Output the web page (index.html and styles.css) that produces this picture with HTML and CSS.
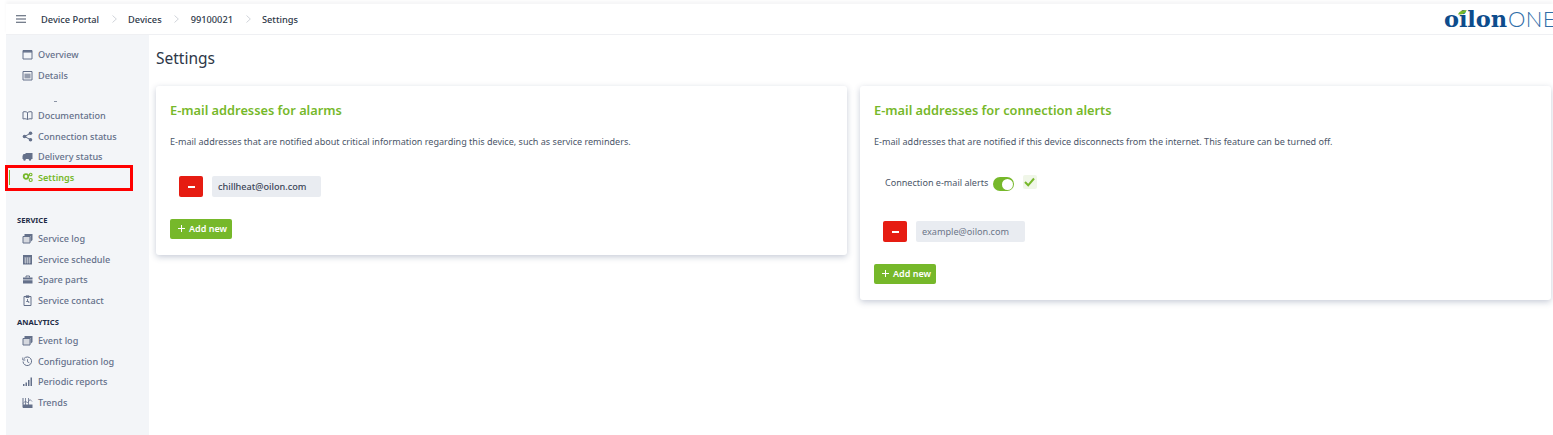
FILE: index.html
```html
<!DOCTYPE html>
<html lang="en">
<head>
<meta charset="utf-8">
<title>Settings</title>
<link rel="stylesheet" href="styles.css">
</head>
<body>
<div class="app">
  <header class="topbar">
    <svg class="burger" width="10" height="8" viewBox="0 0 10 8"><path d="M0 .75h10M0 4h10M0 7.25h10" stroke="#4a5568" stroke-width="1.1"/></svg>
    <nav class="crumbs">
      <span>Device Portal</span><svg class="sep" width="5" height="8" viewBox="0 0 5 8"><path d="M.5.5 4.300 4 .5 7.500" fill="none" stroke="#c5c9d0" stroke-width=".8"/></svg>
      <span>Devices</span><svg class="sep" width="5" height="8" viewBox="0 0 5 8"><path d="M.5.5 4.300 4 .5 7.500" fill="none" stroke="#c5c9d0" stroke-width=".8"/></svg>
      <span>99100021</span><svg class="sep" width="5" height="8" viewBox="0 0 5 8"><path d="M.5.5 4.300 4 .5 7.500" fill="none" stroke="#c5c9d0" stroke-width=".8"/></svg>
      <span>Settings</span>
    </nav>
    <div class="logo"><span class="logo-oilon">oilon</span><span class="logo-one">ONE</span><svg class="leaf" width="9" height="5" viewBox="0 0 9 5"><path d="M0 4.600C1 1.500 4 .2 8.600 0 8 2.800 5.500 4.800 0 4.600Z" fill="#76b82a"/></svg></div>
  </header>
  <div class="body">
    <aside class="sidebar">
      <ul class="menu">
        <li class="item"><svg width="11" height="11" viewBox="0 0 11 11"><path d="M1 1.500h9v8.500H1z" fill="none" stroke="#64708a"/><path d="M1 2.800h9" stroke="#64708a" stroke-width="1.500"/></svg>Overview</li>
        <li class="item"><svg width="11" height="11" viewBox="0 0 11 11"><path d="M1 1.500h9v8.500H1z" fill="none" stroke="#64708a"/><path d="M2.500 3.500h6v5h-6z" fill="#a9afbc"/><path d="M2.500 5h6M2.500 7h6" stroke="#64708a" stroke-width=".6"/></svg>Details</li>
      </ul>
      <div class="dash"></div>
      <ul class="menu">
        <li class="item"><svg width="11" height="11" viewBox="0 0 11 11"><path d="M5.500 2.500C4 1.500 2 1.500 1 2v7c1-.4 3-.4 4.500.5C7 8.600 9 8.600 10 9V2c-1-.5-3-.5-4.500.5zm0 0v7" fill="none" stroke="#64708a"/></svg>Documentation</li>
        <li class="item"><svg width="11" height="11" viewBox="0 0 11 11"><circle cx="2.500" cy="5.500" r="1.800" fill="#64708a"/><circle cx="8.500" cy="2.300" r="1.800" fill="#64708a"/><circle cx="8.500" cy="8.700" r="1.800" fill="#64708a"/><path d="M2.500 5.500l6-3.200M2.500 5.500l6 3.200" stroke="#64708a"/></svg>Connection status</li>
        <li class="item"><svg width="11" height="11" viewBox="0 0 11 11"><path d="M3.500 2H10.500V8H3.500zM.5 5l1-2h2v5H.5z" fill="#64708a"/><circle cx="2.500" cy="8.500" r="1.200" fill="#64708a"/><circle cx="8" cy="8.500" r="1.200" fill="#64708a"/></svg>Delivery status</li>
        <li class="item active"><svg width="11" height="11" viewBox="0 0 11 11"><circle cx="4" cy="4.500" r="2.300" fill="none" stroke="#76b82a" stroke-width="1.800"/><circle cx="8.700" cy="2.500" r="1.300" fill="none" stroke="#76b82a" stroke-width="1.100"/><circle cx="8.700" cy="8" r="1.500" fill="none" stroke="#76b82a" stroke-width="1.200"/></svg>Settings</li>
      </ul>
      <div class="group first">SERVICE</div>
      <ul class="menu">
        <li class="item"><svg width="11" height="11" viewBox="0 0 11 11"><path d="M1 3.500h7v6.500H1z" fill="#d5d8df" stroke="#64708a"/><path d="M2.500 1h8v6l-2 2V3H2.500z" fill="#64708a"/></svg>Service log</li>
        <li class="item"><svg width="11" height="11" viewBox="0 0 11 11"><path d="M1 1h9v9.500H1z" fill="#64708a"/><path d="M2 4h7M2 6h7M2 8h7M3.500 3.500v6M5.500 3.500v6M7.500 3.500v6" stroke="#d8dbe1" stroke-width=".6"/></svg>Service schedule</li>
        <li class="item"><svg width="11" height="11" viewBox="0 0 11 11"><path d="M1 3.500h9.500v2H1zM1 6.200h9.500V9.500H1z" fill="#64708a"/><path d="M4 3.500V2h3.500v1.500" fill="none" stroke="#64708a"/></svg>Spare parts</li>
        <li class="item"><svg width="11" height="11" viewBox="0 0 11 11"><path d="M2 1.500h7v9H2z" fill="none" stroke="#64708a"/><path d="M4 .8h3v1.700H4zM5.500 4v2.500M4.200 6.500h2.600v1.500" fill="none" stroke="#64708a" stroke-width=".9"/></svg>Service contact</li>
      </ul>
      <div class="group">ANALYTICS</div>
      <ul class="menu">
        <li class="item"><svg width="11" height="11" viewBox="0 0 11 11"><path d="M1 3.500h7v6.500H1z" fill="#d5d8df" stroke="#64708a"/><path d="M2.500 1h8v6l-2 2V3H2.500z" fill="#64708a"/></svg>Event log</li>
        <li class="item"><svg width="11" height="11" viewBox="0 0 11 11"><path d="M2 2.500a4.300 4.300 0 1 1-1 3" fill="none" stroke="#64708a"/><path d="M.8 1.500v2.500h2.500" fill="none" stroke="#64708a" stroke-width=".9"/><path d="M5.500 3.200v2.600l1.800 1" fill="none" stroke="#64708a" stroke-width=".9"/></svg>Configuration log</li>
        <li class="item"><svg width="11" height="11" viewBox="0 0 11 11"><path d="M1 8h1.500v2H1zM3.500 6.500H5V10H3.500zM6 4h1.500v6H6zM8.500 1.500H10V10H8.500z" fill="#64708a"/></svg>Periodic reports</li>
        <li class="item"><svg width="11" height="11" viewBox="0 0 11 11"><path d="M1 1v9.500h9.500" fill="none" stroke="#64708a"/><path d="M1 6.500 3.500 4l2 2L8 2.500l2 2M3.500 1v9M6.500 1v9" fill="none" stroke="#64708a" stroke-width=".8"/><path d="M1 7.500h9.500V10H1z" fill="#64708a"/></svg>Trends</li>
      </ul>
    </aside>
    <main class="content">
      <h1 class="title">Settings</h1>
      <div class="cards">
        <section class="card">
          <h2 class="card-title">E-mail addresses for alarms</h2>
          <p class="card-text">E-mail addresses that are notified about critical information regarding this device, such as service reminders.</p>
          <div class="email-row">
            <button class="remove"><svg width="7" height="2" viewBox="0 0 7 2"><path d="M0 0h7v2H0z" fill="#fff"/></svg></button>
            <div class="email">chillheat@oilon.com</div>
          </div>
          <button class="add"><svg width="7" height="7" viewBox="0 0 7 7"><path d="M3.500 0v7M0 3.500h7" stroke="#fff"/></svg>Add new</button>
        </section>
        <section class="card">
          <h2 class="card-title">E-mail addresses for connection alerts</h2>
          <p class="card-text">E-mail addresses that are notified if this device disconnects from the internet. This feature can be turned off.</p>
          <div class="toggle-row">
            <span class="toggle-label">Connection e-mail alerts</span>
            <span class="toggle"></span>
            <span class="tick"><svg width="11" height="10" viewBox="0 0 11 10"><path d="M1 5 4.200 8.300 10 1.500" fill="none" stroke="#76b82a" stroke-width="2"/></svg></span>
          </div>
          <div class="email-row second">
            <button class="remove"><svg width="7" height="2" viewBox="0 0 7 2"><path d="M0 0h7v2H0z" fill="#fff"/></svg></button>
            <div class="email placeholder">example@oilon.com</div>
          </div>
          <button class="add"><svg width="7" height="7" viewBox="0 0 7 7"><path d="M3.500 0v7M0 3.500h7" stroke="#fff"/></svg>Add new</button>
        </section>
      </div>
    </main>
  </div>
  <div class="highlight"></div>
</div>
</body>
</html>
```
FILE: styles.css
```css
* { box-sizing: border-box; }
html, body { margin: 0; padding: 0; height: 100%; overflow: hidden; }
body { background: #fff; font-family: "Noto Sans", "Open Sans", sans-serif; font-size: 9.050px; color: #4a5568; }
.app { position: relative; height: 435px; padding: 4px 0 0 6px; background: #fff; }
.topbar { display: flex; align-items: center; height: 31px; padding-left: 10px; background: #fff; border-bottom: 1px solid #eff0f3; box-shadow: 0 -3px 3px #f6f6f7; overflow: hidden; }
.burger { margin-right: 15px; flex: none; }
.crumbs { display: flex; align-items: center; font-size: 9.250px; font-weight: 500; color: #2d3748; }
.sep { margin: 0 11.300px 0 12.700px; }
.logo { position: relative; margin-left: auto; display: flex; align-items: baseline; height: 24px; width: 109px; flex: none; line-height: 24px; white-space: nowrap; }
.logo-oilon { font-family: "DejaVu Serif", serif; font-weight: 700; font-size: 22.500px; letter-spacing: -.1px; color: #0d4c8c; }
.logo-one { font-family: Lato, sans-serif; font-weight: 300; font-size: 22px; letter-spacing: .4px; color: #2f6da8; margin-left: 1px; }
.leaf { position: absolute; left: 14px; top: 3px; }
.body { display: flex; height: 400px; }
.sidebar { flex: none; width: 143px; background: #f3f5f8; padding: 9.500px 0 0 11px; }
.menu { list-style: none; margin: 0; padding: 0; }
.item { display: flex; align-items: center; gap: 5px; height: 20.500px; padding-left: 5px; font-size: 9.100px; font-weight: 500; color: #64708a; white-space: nowrap; position: relative; }
.item svg { flex: none; }
.item.active { color: #76b82a; font-weight: 600; }
.item.active::before { content: ""; position: absolute; left: -8px; top: 3px; bottom: 2.500px; width: 1px; background: #76b82a; }
.dash { width: 3px; height: 1px; background: #8a93a5; margin: 15px 0 4px 37px; }
.group { font-size: 7.600px; font-weight: 700; color: #1e2b45; height: 12px; line-height: 12px; }
.group.first { margin-top: 26px; margin-bottom: 3px; }
.group + .menu { margin-top: 1px; }
.group:not(.first) { margin-top: 5px; margin-bottom: 3px; }
.content { flex: 1; min-width: 0; padding: 0 2px 0 7px; }
.title { margin: 11px 0 16px; font-size: 15.500px; font-weight: 400; line-height: 24px; color: #2d3748; }
.cards { display: flex; align-items: flex-start; gap: 13px; }
.card { flex: 1; background: #fff; border-radius: 3px; box-shadow: 0 2px 6px rgba(80, 95, 130, .32); padding: 14px 14px 16px; }
.card-title { margin: 0; font-size: 12.800px; line-height: 20px; font-weight: 600; color: #76b82a; }
.card-text { margin: 14px 0 0; line-height: 16px; }
.email-row { display: flex; align-items: center; gap: 9px; margin: 26px 0 0 9px; }
.email-row.second { margin-top: 29px; }
.remove { width: 24px; height: 21px; border: 0; padding: 0; border-radius: 2px; background: #e61c12; display: flex; align-items: center; justify-content: center; }
.email { width: 109px; height: 21px; line-height: 21px; padding-left: 6px; border-radius: 2px; background: #e9ecf1; font-size: 9.150px; font-weight: 500; color: #3b4557; }
.email.placeholder { color: #6b7588; font-weight: 400; }
.add { display: flex; align-items: center; gap: 4px; width: 62px; height: 20.500px; margin-top: 21.500px; border: 0; padding: 0 0 0 8px; border-radius: 2px; background: #76b82a; color: #fff; font: 600 9px "Noto Sans", "Open Sans", sans-serif; }
.toggle-row { display: flex; align-items: center; height: 16px; margin: 26px 0 0 11px; }
.toggle-label { margin-top: -4px; }
.toggle { position: relative; width: 21px; height: 14px; margin-left: 5px; border-radius: 7px; background: #76b82a; }
.toggle::after { content: ""; position: absolute; right: 1.500px; top: 1.500px; width: 11px; height: 11px; border-radius: 50%; background: #fff; }
.tick { display: flex; align-items: center; justify-content: center; width: 14px; height: 14px; margin: -4px 0 0 8.500px; border-radius: 2px; background: #f0f6e8; }
.highlight { position: absolute; left: 5px; top: 165px; width: 128px; height: 26px; border: 3px solid #f00; pointer-events: none; }
```
